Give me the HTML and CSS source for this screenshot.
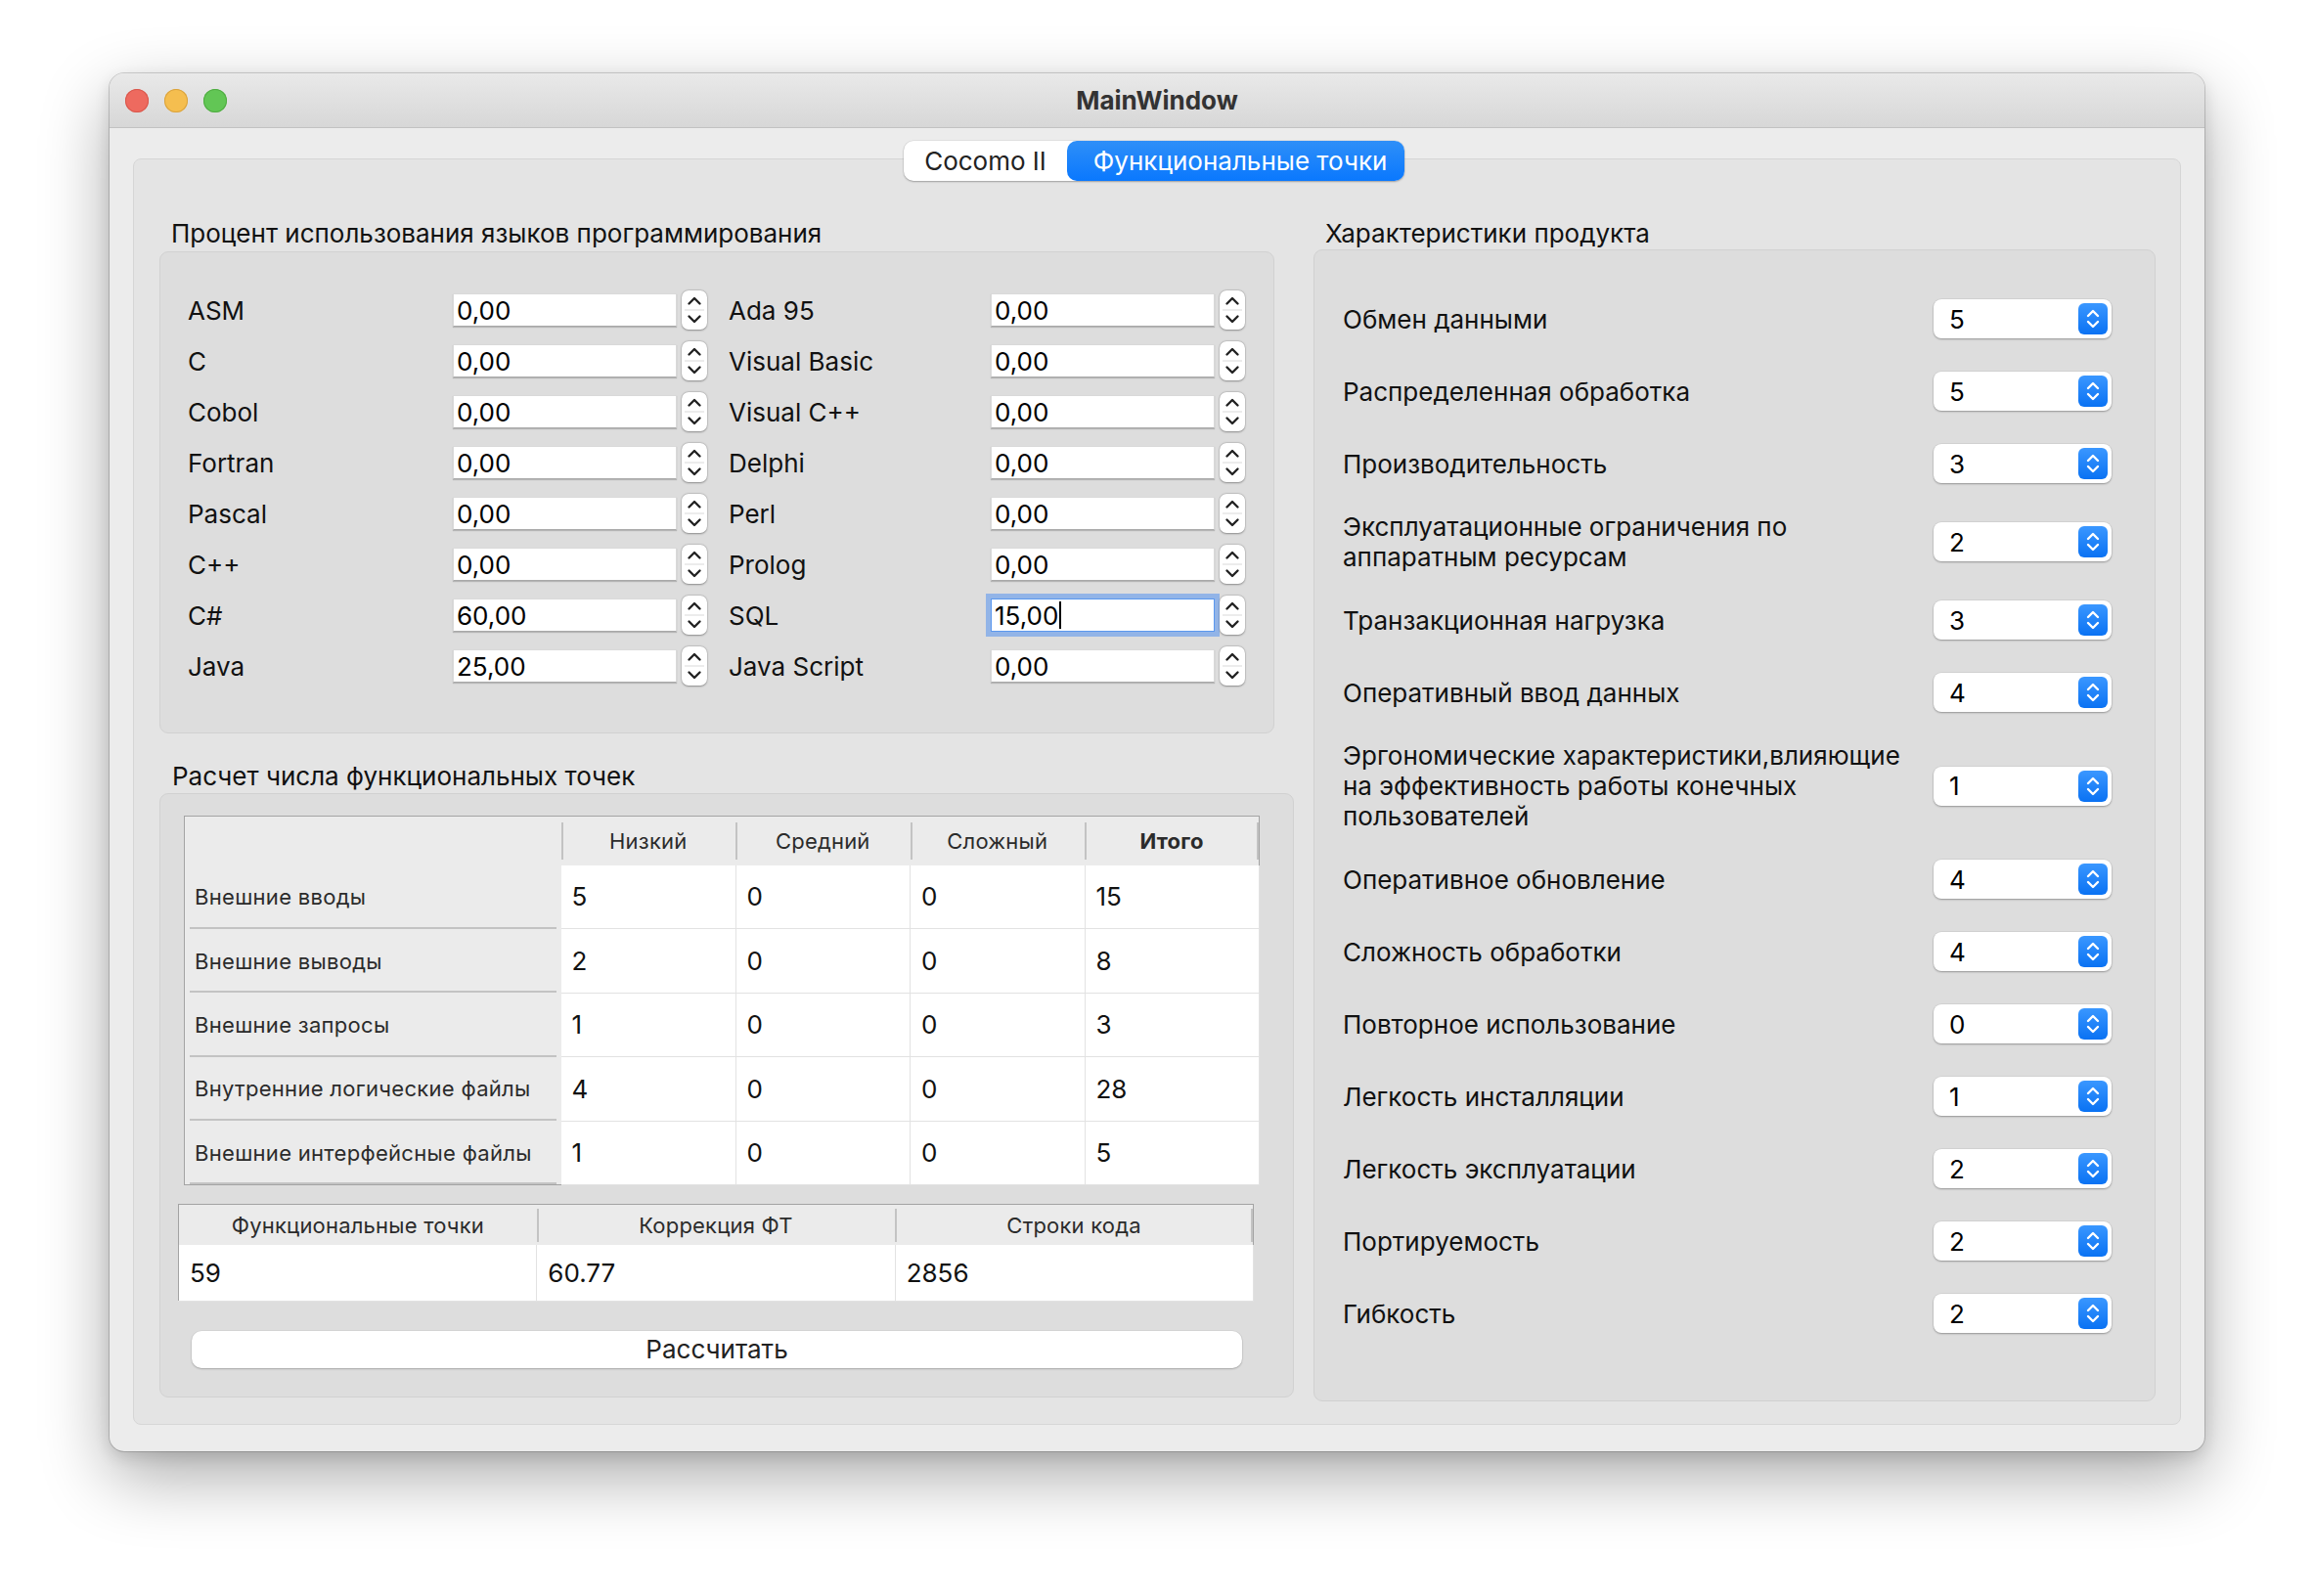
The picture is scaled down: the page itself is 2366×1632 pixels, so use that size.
FILE: index.html
```html
<!DOCTYPE html>
<html lang="ru">
<head>
<meta charset="utf-8">
<title>MainWindow</title>
<link rel="stylesheet" href="styles.css">
</head>
<body>
<div class="window">
  <div class="titlebar">
    <div class="lights"><span class="light red"></span><span class="light yellow"></span><span class="light green"></span></div>
    <div class="wtitle">MainWindow</div>
    <div></div>
  </div>
  <div class="content">
    <div class="tabs">
      <div class="tab">Cocomo II</div>
      <div class="tab active">Функциональные точки</div>
    </div>
    <div class="pane">
      <div class="col-left">
        <div class="gtitle">Процент использования языков программирования</div>
        <div class="group g-lang">
          <div class="lang-grid">
            <div class="lbl">ASM</div>
            <div class="spin"><div class="field">0,00</div><div class="stepper"><svg viewBox="0 0 26 40" width="26" height="40"><line x1="3" y1="20" x2="23" y2="20" class="sep"/><path d="M7.5 13.5 L13 8 L18.5 13.5" class="chev"/><path d="M7.5 26.5 L13 32 L18.5 26.5" class="chev"/></svg></div></div>
            <div class="lbl">Ada 95</div>
            <div class="spin"><div class="field">0,00</div><div class="stepper"><svg viewBox="0 0 26 40" width="26" height="40"><line x1="3" y1="20" x2="23" y2="20" class="sep"/><path d="M7.5 13.5 L13 8 L18.5 13.5" class="chev"/><path d="M7.5 26.5 L13 32 L18.5 26.5" class="chev"/></svg></div></div>

            <div class="lbl">C</div>
            <div class="spin"><div class="field">0,00</div><div class="stepper"><svg viewBox="0 0 26 40" width="26" height="40"><line x1="3" y1="20" x2="23" y2="20" class="sep"/><path d="M7.5 13.5 L13 8 L18.5 13.5" class="chev"/><path d="M7.5 26.5 L13 32 L18.5 26.5" class="chev"/></svg></div></div>
            <div class="lbl">Visual Basic</div>
            <div class="spin"><div class="field">0,00</div><div class="stepper"><svg viewBox="0 0 26 40" width="26" height="40"><line x1="3" y1="20" x2="23" y2="20" class="sep"/><path d="M7.5 13.5 L13 8 L18.5 13.5" class="chev"/><path d="M7.5 26.5 L13 32 L18.5 26.5" class="chev"/></svg></div></div>

            <div class="lbl">Cobol</div>
            <div class="spin"><div class="field">0,00</div><div class="stepper"><svg viewBox="0 0 26 40" width="26" height="40"><line x1="3" y1="20" x2="23" y2="20" class="sep"/><path d="M7.5 13.5 L13 8 L18.5 13.5" class="chev"/><path d="M7.5 26.5 L13 32 L18.5 26.5" class="chev"/></svg></div></div>
            <div class="lbl">Visual C++</div>
            <div class="spin"><div class="field">0,00</div><div class="stepper"><svg viewBox="0 0 26 40" width="26" height="40"><line x1="3" y1="20" x2="23" y2="20" class="sep"/><path d="M7.5 13.5 L13 8 L18.5 13.5" class="chev"/><path d="M7.5 26.5 L13 32 L18.5 26.5" class="chev"/></svg></div></div>

            <div class="lbl">Fortran</div>
            <div class="spin"><div class="field">0,00</div><div class="stepper"><svg viewBox="0 0 26 40" width="26" height="40"><line x1="3" y1="20" x2="23" y2="20" class="sep"/><path d="M7.5 13.5 L13 8 L18.5 13.5" class="chev"/><path d="M7.5 26.5 L13 32 L18.5 26.5" class="chev"/></svg></div></div>
            <div class="lbl">Delphi</div>
            <div class="spin"><div class="field">0,00</div><div class="stepper"><svg viewBox="0 0 26 40" width="26" height="40"><line x1="3" y1="20" x2="23" y2="20" class="sep"/><path d="M7.5 13.5 L13 8 L18.5 13.5" class="chev"/><path d="M7.5 26.5 L13 32 L18.5 26.5" class="chev"/></svg></div></div>

            <div class="lbl">Pascal</div>
            <div class="spin"><div class="field">0,00</div><div class="stepper"><svg viewBox="0 0 26 40" width="26" height="40"><line x1="3" y1="20" x2="23" y2="20" class="sep"/><path d="M7.5 13.5 L13 8 L18.5 13.5" class="chev"/><path d="M7.5 26.5 L13 32 L18.5 26.5" class="chev"/></svg></div></div>
            <div class="lbl">Perl</div>
            <div class="spin"><div class="field">0,00</div><div class="stepper"><svg viewBox="0 0 26 40" width="26" height="40"><line x1="3" y1="20" x2="23" y2="20" class="sep"/><path d="M7.5 13.5 L13 8 L18.5 13.5" class="chev"/><path d="M7.5 26.5 L13 32 L18.5 26.5" class="chev"/></svg></div></div>

            <div class="lbl">C++</div>
            <div class="spin"><div class="field">0,00</div><div class="stepper"><svg viewBox="0 0 26 40" width="26" height="40"><line x1="3" y1="20" x2="23" y2="20" class="sep"/><path d="M7.5 13.5 L13 8 L18.5 13.5" class="chev"/><path d="M7.5 26.5 L13 32 L18.5 26.5" class="chev"/></svg></div></div>
            <div class="lbl">Prolog</div>
            <div class="spin"><div class="field">0,00</div><div class="stepper"><svg viewBox="0 0 26 40" width="26" height="40"><line x1="3" y1="20" x2="23" y2="20" class="sep"/><path d="M7.5 13.5 L13 8 L18.5 13.5" class="chev"/><path d="M7.5 26.5 L13 32 L18.5 26.5" class="chev"/></svg></div></div>

            <div class="lbl">C#</div>
            <div class="spin"><div class="field">60,00</div><div class="stepper"><svg viewBox="0 0 26 40" width="26" height="40"><line x1="3" y1="20" x2="23" y2="20" class="sep"/><path d="M7.5 13.5 L13 8 L18.5 13.5" class="chev"/><path d="M7.5 26.5 L13 32 L18.5 26.5" class="chev"/></svg></div></div>
            <div class="lbl">SQL</div>
            <div class="spin"><div class="field focused">15,00<span class="caret"></span></div><div class="stepper"><svg viewBox="0 0 26 40" width="26" height="40"><line x1="3" y1="20" x2="23" y2="20" class="sep"/><path d="M7.5 13.5 L13 8 L18.5 13.5" class="chev"/><path d="M7.5 26.5 L13 32 L18.5 26.5" class="chev"/></svg></div></div>

            <div class="lbl">Java</div>
            <div class="spin"><div class="field">25,00</div><div class="stepper"><svg viewBox="0 0 26 40" width="26" height="40"><line x1="3" y1="20" x2="23" y2="20" class="sep"/><path d="M7.5 13.5 L13 8 L18.5 13.5" class="chev"/><path d="M7.5 26.5 L13 32 L18.5 26.5" class="chev"/></svg></div></div>
            <div class="lbl">Java Script</div>
            <div class="spin"><div class="field">0,00</div><div class="stepper"><svg viewBox="0 0 26 40" width="26" height="40"><line x1="3" y1="20" x2="23" y2="20" class="sep"/><path d="M7.5 13.5 L13 8 L18.5 13.5" class="chev"/><path d="M7.5 26.5 L13 32 L18.5 26.5" class="chev"/></svg></div></div>
          </div>
        </div>

        <div class="gtitle gt2">Расчет числа функциональных точек</div>
        <div class="group g-fp">
          <table class="tbl t1">
            <colgroup><col class="c-vh"><col><col><col><col></colgroup>
            <thead>
              <tr><th class="corner"></th><th>Низкий</th><th>Средний</th><th>Сложный</th><th class="last strong">Итого</th></tr>
            </thead>
            <tbody>
              <tr><th class="vh">Внешние вводы</th><td>5</td><td>0</td><td>0</td><td>15</td></tr>
              <tr><th class="vh">Внешние выводы</th><td>2</td><td>0</td><td>0</td><td>8</td></tr>
              <tr><th class="vh">Внешние запросы</th><td>1</td><td>0</td><td>0</td><td>3</td></tr>
              <tr><th class="vh">Внутренние логические файлы</th><td>4</td><td>0</td><td>0</td><td>28</td></tr>
              <tr><th class="vh">Внешние интерфейсные файлы</th><td>1</td><td>0</td><td>0</td><td>5</td></tr>
            </tbody>
          </table>

          <table class="tbl t2">
            <thead>
              <tr><th class="first">Функциональные точки</th><th>Коррекция ФТ</th><th class="last">Строки кода</th></tr>
            </thead>
            <tbody>
              <tr><td>59</td><td>60.77</td><td>2856</td></tr>
            </tbody>
          </table>

          <div class="btn">Рассчитать</div>
        </div>
      </div>

      <div class="col-right">
        <div class="gtitle">Характеристики продукта</div>
        <div class="group g-char">
          <div class="crow"><div class="clbl">Обмен данными</div><div class="combo"><span>5</span><span class="carrow"><svg viewBox="0 0 30 32" width="30" height="32"><path d="M10 13 L15 8 L20 13" class="wchev"/><path d="M10 19 L15 24 L20 19" class="wchev"/></svg></span></div></div>
          <div class="crow"><div class="clbl">Распределенная обработка</div><div class="combo"><span>5</span><span class="carrow"><svg viewBox="0 0 30 32" width="30" height="32"><path d="M10 13 L15 8 L20 13" class="wchev"/><path d="M10 19 L15 24 L20 19" class="wchev"/></svg></span></div></div>
          <div class="crow"><div class="clbl">Производительность</div><div class="combo"><span>3</span><span class="carrow"><svg viewBox="0 0 30 32" width="30" height="32"><path d="M10 13 L15 8 L20 13" class="wchev"/><path d="M10 19 L15 24 L20 19" class="wchev"/></svg></span></div></div>
          <div class="crow"><div class="clbl">Эксплуатационные ограничения по<br>аппаратным ресурсам</div><div class="combo"><span>2</span><span class="carrow"><svg viewBox="0 0 30 32" width="30" height="32"><path d="M10 13 L15 8 L20 13" class="wchev"/><path d="M10 19 L15 24 L20 19" class="wchev"/></svg></span></div></div>
          <div class="crow"><div class="clbl">Транзакционная нагрузка</div><div class="combo"><span>3</span><span class="carrow"><svg viewBox="0 0 30 32" width="30" height="32"><path d="M10 13 L15 8 L20 13" class="wchev"/><path d="M10 19 L15 24 L20 19" class="wchev"/></svg></span></div></div>
          <div class="crow"><div class="clbl">Оперативный ввод данных</div><div class="combo"><span>4</span><span class="carrow"><svg viewBox="0 0 30 32" width="30" height="32"><path d="M10 13 L15 8 L20 13" class="wchev"/><path d="M10 19 L15 24 L20 19" class="wchev"/></svg></span></div></div>
          <div class="crow"><div class="clbl">Эргономические характеристики,влияющие<br>на эффективность работы конечных<br>пользователей</div><div class="combo"><span>1</span><span class="carrow"><svg viewBox="0 0 30 32" width="30" height="32"><path d="M10 13 L15 8 L20 13" class="wchev"/><path d="M10 19 L15 24 L20 19" class="wchev"/></svg></span></div></div>
          <div class="crow"><div class="clbl">Оперативное обновление</div><div class="combo"><span>4</span><span class="carrow"><svg viewBox="0 0 30 32" width="30" height="32"><path d="M10 13 L15 8 L20 13" class="wchev"/><path d="M10 19 L15 24 L20 19" class="wchev"/></svg></span></div></div>
          <div class="crow"><div class="clbl">Сложность обработки</div><div class="combo"><span>4</span><span class="carrow"><svg viewBox="0 0 30 32" width="30" height="32"><path d="M10 13 L15 8 L20 13" class="wchev"/><path d="M10 19 L15 24 L20 19" class="wchev"/></svg></span></div></div>
          <div class="crow"><div class="clbl">Повторное использование</div><div class="combo"><span>0</span><span class="carrow"><svg viewBox="0 0 30 32" width="30" height="32"><path d="M10 13 L15 8 L20 13" class="wchev"/><path d="M10 19 L15 24 L20 19" class="wchev"/></svg></span></div></div>
          <div class="crow"><div class="clbl">Легкость инсталляции</div><div class="combo"><span>1</span><span class="carrow"><svg viewBox="0 0 30 32" width="30" height="32"><path d="M10 13 L15 8 L20 13" class="wchev"/><path d="M10 19 L15 24 L20 19" class="wchev"/></svg></span></div></div>
          <div class="crow"><div class="clbl">Легкость эксплуатации</div><div class="combo"><span>2</span><span class="carrow"><svg viewBox="0 0 30 32" width="30" height="32"><path d="M10 13 L15 8 L20 13" class="wchev"/><path d="M10 19 L15 24 L20 19" class="wchev"/></svg></span></div></div>
          <div class="crow"><div class="clbl">Портируемость</div><div class="combo"><span>2</span><span class="carrow"><svg viewBox="0 0 30 32" width="30" height="32"><path d="M10 13 L15 8 L20 13" class="wchev"/><path d="M10 19 L15 24 L20 19" class="wchev"/></svg></span></div></div>
          <div class="crow"><div class="clbl">Гибкость</div><div class="combo"><span>2</span><span class="carrow"><svg viewBox="0 0 30 32" width="30" height="32"><path d="M10 13 L15 8 L20 13" class="wchev"/><path d="M10 19 L15 24 L20 19" class="wchev"/></svg></span></div></div>
        </div>
      </div>
    </div>
  </div>
</div>
</body>
</html>
```

FILE: styles.css
```css
* { box-sizing: border-box; }
html, body { margin: 0; }
body {
  width: 2366px;
  height: 1632px;
  overflow: hidden;
  background: #ffffff;
  padding: 75px 0 0 112px;
  font-family: Inter, "Liberation Sans", "Noto Sans", sans-serif;
  font-size: 26px;
  color: #111;
}

.window {
  width: 2142px;
  height: 1409px;
  border-radius: 15px;
  overflow: hidden;
  background: #ececec;
  display: flex;
  flex-direction: column;
  box-shadow: 0 0 0 1px rgba(0,0,0,0.16), 0 26px 70px rgba(0,0,0,0.33), 0 6px 16px rgba(0,0,0,0.12);
}

.titlebar {
  flex: none;
  height: 56px;
  display: grid;
  grid-template-columns: 1fr auto 1fr;
  align-items: center;
  padding: 0 16px;
  background: linear-gradient(#e9e9e9, #d7d7d7);
  border-bottom: 1px solid #c2c2c2;
}
.lights { display: flex; gap: 16px; }
.light { width: 24px; height: 24px; border-radius: 50%; }
.red { background: #ee6a5f; box-shadow: inset 0 0 0 1px #d8574c; }
.yellow { background: #f5be4f; box-shadow: inset 0 0 0 1px #d9a23d; }
.green { background: #62c655; box-shadow: inset 0 0 0 1px #4fab41; }
.wtitle { font-weight: 700; font-size: 26px; color: #333; }

.content {
  flex: 1;
  display: flex;
  flex-direction: column;
  padding: 13px 24px 27px 24px;
}

.tabs {
  align-self: center;
  display: flex;
  height: 41px;
  position: relative;
  z-index: 1;
  margin-bottom: -23px;
  margin-left: -6px;
  border-radius: 10px;
  background: #fff;
  box-shadow: 0 1px 2px rgba(0,0,0,0.28), 0 0 0 0.5px rgba(0,0,0,0.08);
}
.tab {
  height: 41px;
  line-height: 41px;
  padding: 0 21px;
  color: #222;
  white-space: nowrap;
}
.tab.active {
  width: 345px;
  padding: 0 0 0 27px;
  color: #fff;
  border-radius: 10px;
  background: linear-gradient(#2e8ff8, #0a78fe);
}

.pane {
  flex: 1;
  display: flex;
  gap: 20px;
  padding: 60px 25px 0 26px;
  background: #e4e4e4;
  border: 1px solid #d6d6d6;
  border-radius: 8px;
}

.col-left { width: 1160px; flex: none; }
.col-right { width: 861px; flex: none; }

.gtitle {
  height: 32px;
  line-height: 32px;
  padding-left: 12px;
  color: #111;
  white-space: nowrap;
}
.gt2 { margin-top: 28px; padding-left: 13px; }

.group {
  background: #dddddd;
  border: 1px solid #d1d1d1;
  border-radius: 9px;
}

.g-lang {
  width: 1140px;
  height: 493px;
  margin-top: 2px;
  padding: 39px 0 0 28px;
}
.lang-grid {
  display: grid;
  grid-template-columns: 271px 282px 268px 260px;
  grid-auto-rows: 40px;
  row-gap: 12px;
  align-items: center;
}
.lbl { white-space: nowrap; }
.spin { display: flex; align-items: center; height: 40px; }
.field {
  width: 229px;
  height: 34px;
  line-height: 33px;
  padding-left: 3px;
  background: #fff;
  border: 1px solid #d9d9d9;
  border-bottom: 1px solid #a9a9a9;
  box-shadow: 0 1px 1px rgba(0,0,0,0.18);
  color: #000;
  display: flex;
  align-items: center;
}
.field.focused {
  border-color: #5b98ee;
  box-shadow: 0 0 0 5px rgba(84,145,238,0.55);
}
.caret {
  display: inline-block;
  width: 2px;
  height: 28px;
  margin-left: 1px;
  background: #000;
}
.stepper {
  width: 26px;
  height: 40px;
  margin-left: 5px;
  background: #fff;
  border-radius: 7px;
  box-shadow: 0 0.5px 2px rgba(0,0,0,0.35), 0 0 0 0.5px rgba(0,0,0,0.08);
}
.stepper svg { display: block; }
.chev { fill: none; stroke: #222; stroke-width: 2.4; stroke-linecap: round; stroke-linejoin: round; }
.sep { stroke: #e6e6e6; stroke-width: 1.5; }

.g-fp {
  width: 1160px;
  height: 618px;
  margin-top: 1px;
  padding: 22px 0 0 24px;
}

.tbl {
  border-collapse: collapse;
  table-layout: fixed;
  width: 1100px;
  border: 1px solid #a3a3a3;
}
.tbl th {
  font-weight: 400;
  font-size: 22px;
  color: #2b2b2b;
  padding: 0;
  background-color: #ebebeb;
  letter-spacing: 0.2px;
}
.tbl td {
  background: #fff;
  border-right: 1px solid #e2e2e2;
  border-bottom: 1px solid #e2e2e2;
  padding: 0 0 0 11px;
  font-size: 26px;
  color: #111;
}
.t1 .c-vh { width: 385px; }
.t1 thead th {
  height: 50px;
  text-align: center;
  background-image: linear-gradient(#c3c3c3, #c3c3c3);
  background-repeat: no-repeat;
  background-size: 2px 38px;
  background-position: left center;
}
.t1 thead th.corner { background-image: none; }
.t1 thead th.last,
.t2 thead th.last {
  background-image: linear-gradient(#c3c3c3, #c3c3c3), linear-gradient(#c3c3c3, #c3c3c3);
  background-position: left center, right center;
}
.strong { font-weight: 700 !important; }
.t1 th.vh {
  height: 65.4px;
  text-align: left;
  padding-left: 10px;
  white-space: nowrap;
  letter-spacing: 0.3px;
  background-image: linear-gradient(#c3c3c3, #c3c3c3);
  background-repeat: no-repeat;
  background-size: calc(100% - 10px) 2px;
  background-position: center bottom;
}
.t1 td { height: 65.4px; }

.t2 { margin: 19px 0 0 -6px; }
.t2 thead th {
  height: 42px;
  text-align: center;
  background-image: linear-gradient(#c3c3c3, #c3c3c3);
  background-repeat: no-repeat;
  background-size: 2px 34px;
  background-position: left center;
}
.t2 thead th.first { background-image: none; }
.t2 thead th.last { background-size: 2px 34px, 2px 34px; }
.t2 td { height: 57px; }

.btn {
  width: 1074px;
  height: 38px;
  line-height: 38px;
  margin: 30px 0 0 8px;
  text-align: center;
  background: #fff;
  border-radius: 10px;
  color: #222;
  box-shadow: 0 1px 2px rgba(0,0,0,0.22), 0 0 0 0.5px rgba(0,0,0,0.06);
}

.g-char {
  width: 861px;
  height: 1178px;
  padding: 46px 44px 0 29px;
  display: flex;
  flex-direction: column;
  gap: 26px;
}
.crow {
  display: flex;
  align-items: center;
  justify-content: space-between;
  min-height: 48px;
}
.clbl { line-height: 31px; margin: -1px 0; white-space: nowrap; color: #111; }
.combo {
  flex: none;
  width: 182px;
  height: 40px;
  display: flex;
  align-items: center;
  justify-content: space-between;
  padding: 0 4px 0 16px;
  background: #fff;
  border-radius: 8px;
  box-shadow: 0 1px 2px rgba(0,0,0,0.3), 0 0 0 0.5px rgba(0,0,0,0.08);
  color: #000;
}
.carrow {
  width: 30px;
  height: 32px;
  border-radius: 6px;
  background: linear-gradient(#3a97ff, #0a72f3);
}
.carrow svg { display: block; }
.wchev { fill: none; stroke: #fff; stroke-width: 2.4; stroke-linecap: round; stroke-linejoin: round; }
```
